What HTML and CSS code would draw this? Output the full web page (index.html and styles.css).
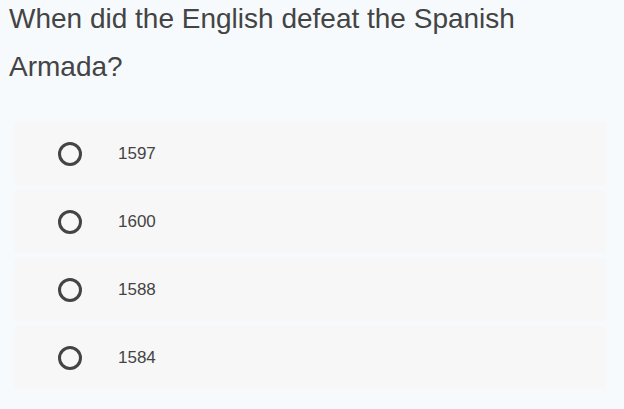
FILE: index.html
```html
<!DOCTYPE html>
<html>
<head>
<meta charset="utf-8">
<link rel="stylesheet" href="styles.css">
</head>
<body>
<div class="quiz">
  <h1 class="question">When did the English defeat the Spanish Armada?</h1>
  <div class="options">
    <label class="option"><span class="radio"></span><span class="label">1597</span></label>
    <label class="option"><span class="radio"></span><span class="label">1600</span></label>
    <label class="option"><span class="radio"></span><span class="label">1588</span></label>
    <label class="option"><span class="radio"></span><span class="label">1584</span></label>
  </div>
</div>
</body>
</html>
```
FILE: styles.css
```css
html, body {
  margin: 0;
  padding: 0;
  background: #f6fafd;
}
body {
  font-family: "Liberation Sans", Arial, sans-serif;
  color: #444;
}
.quiz {
  padding: 0 18px 0 14px;
}
.question {
  margin: -5px 0 0 -5px;
  font-size: 28px;
  font-weight: normal;
  line-height: 48px;
  color: #444;
}
.options {
  margin-top: 31px;
  display: flex;
  flex-direction: column;
  gap: 5px;
}
.option {
  display: flex;
  align-items: center;
  height: 63px;
  background: #f7f7f7;
  border-radius: 4px;
  padding-left: 44px;
}
.radio {
  box-sizing: border-box;
  width: 24px;
  height: 24px;
  border: 3px solid #444;
  border-radius: 50%;
  margin-right: 36px;
}
.label {
  font-size: 17px;
  color: #444;
}
```
